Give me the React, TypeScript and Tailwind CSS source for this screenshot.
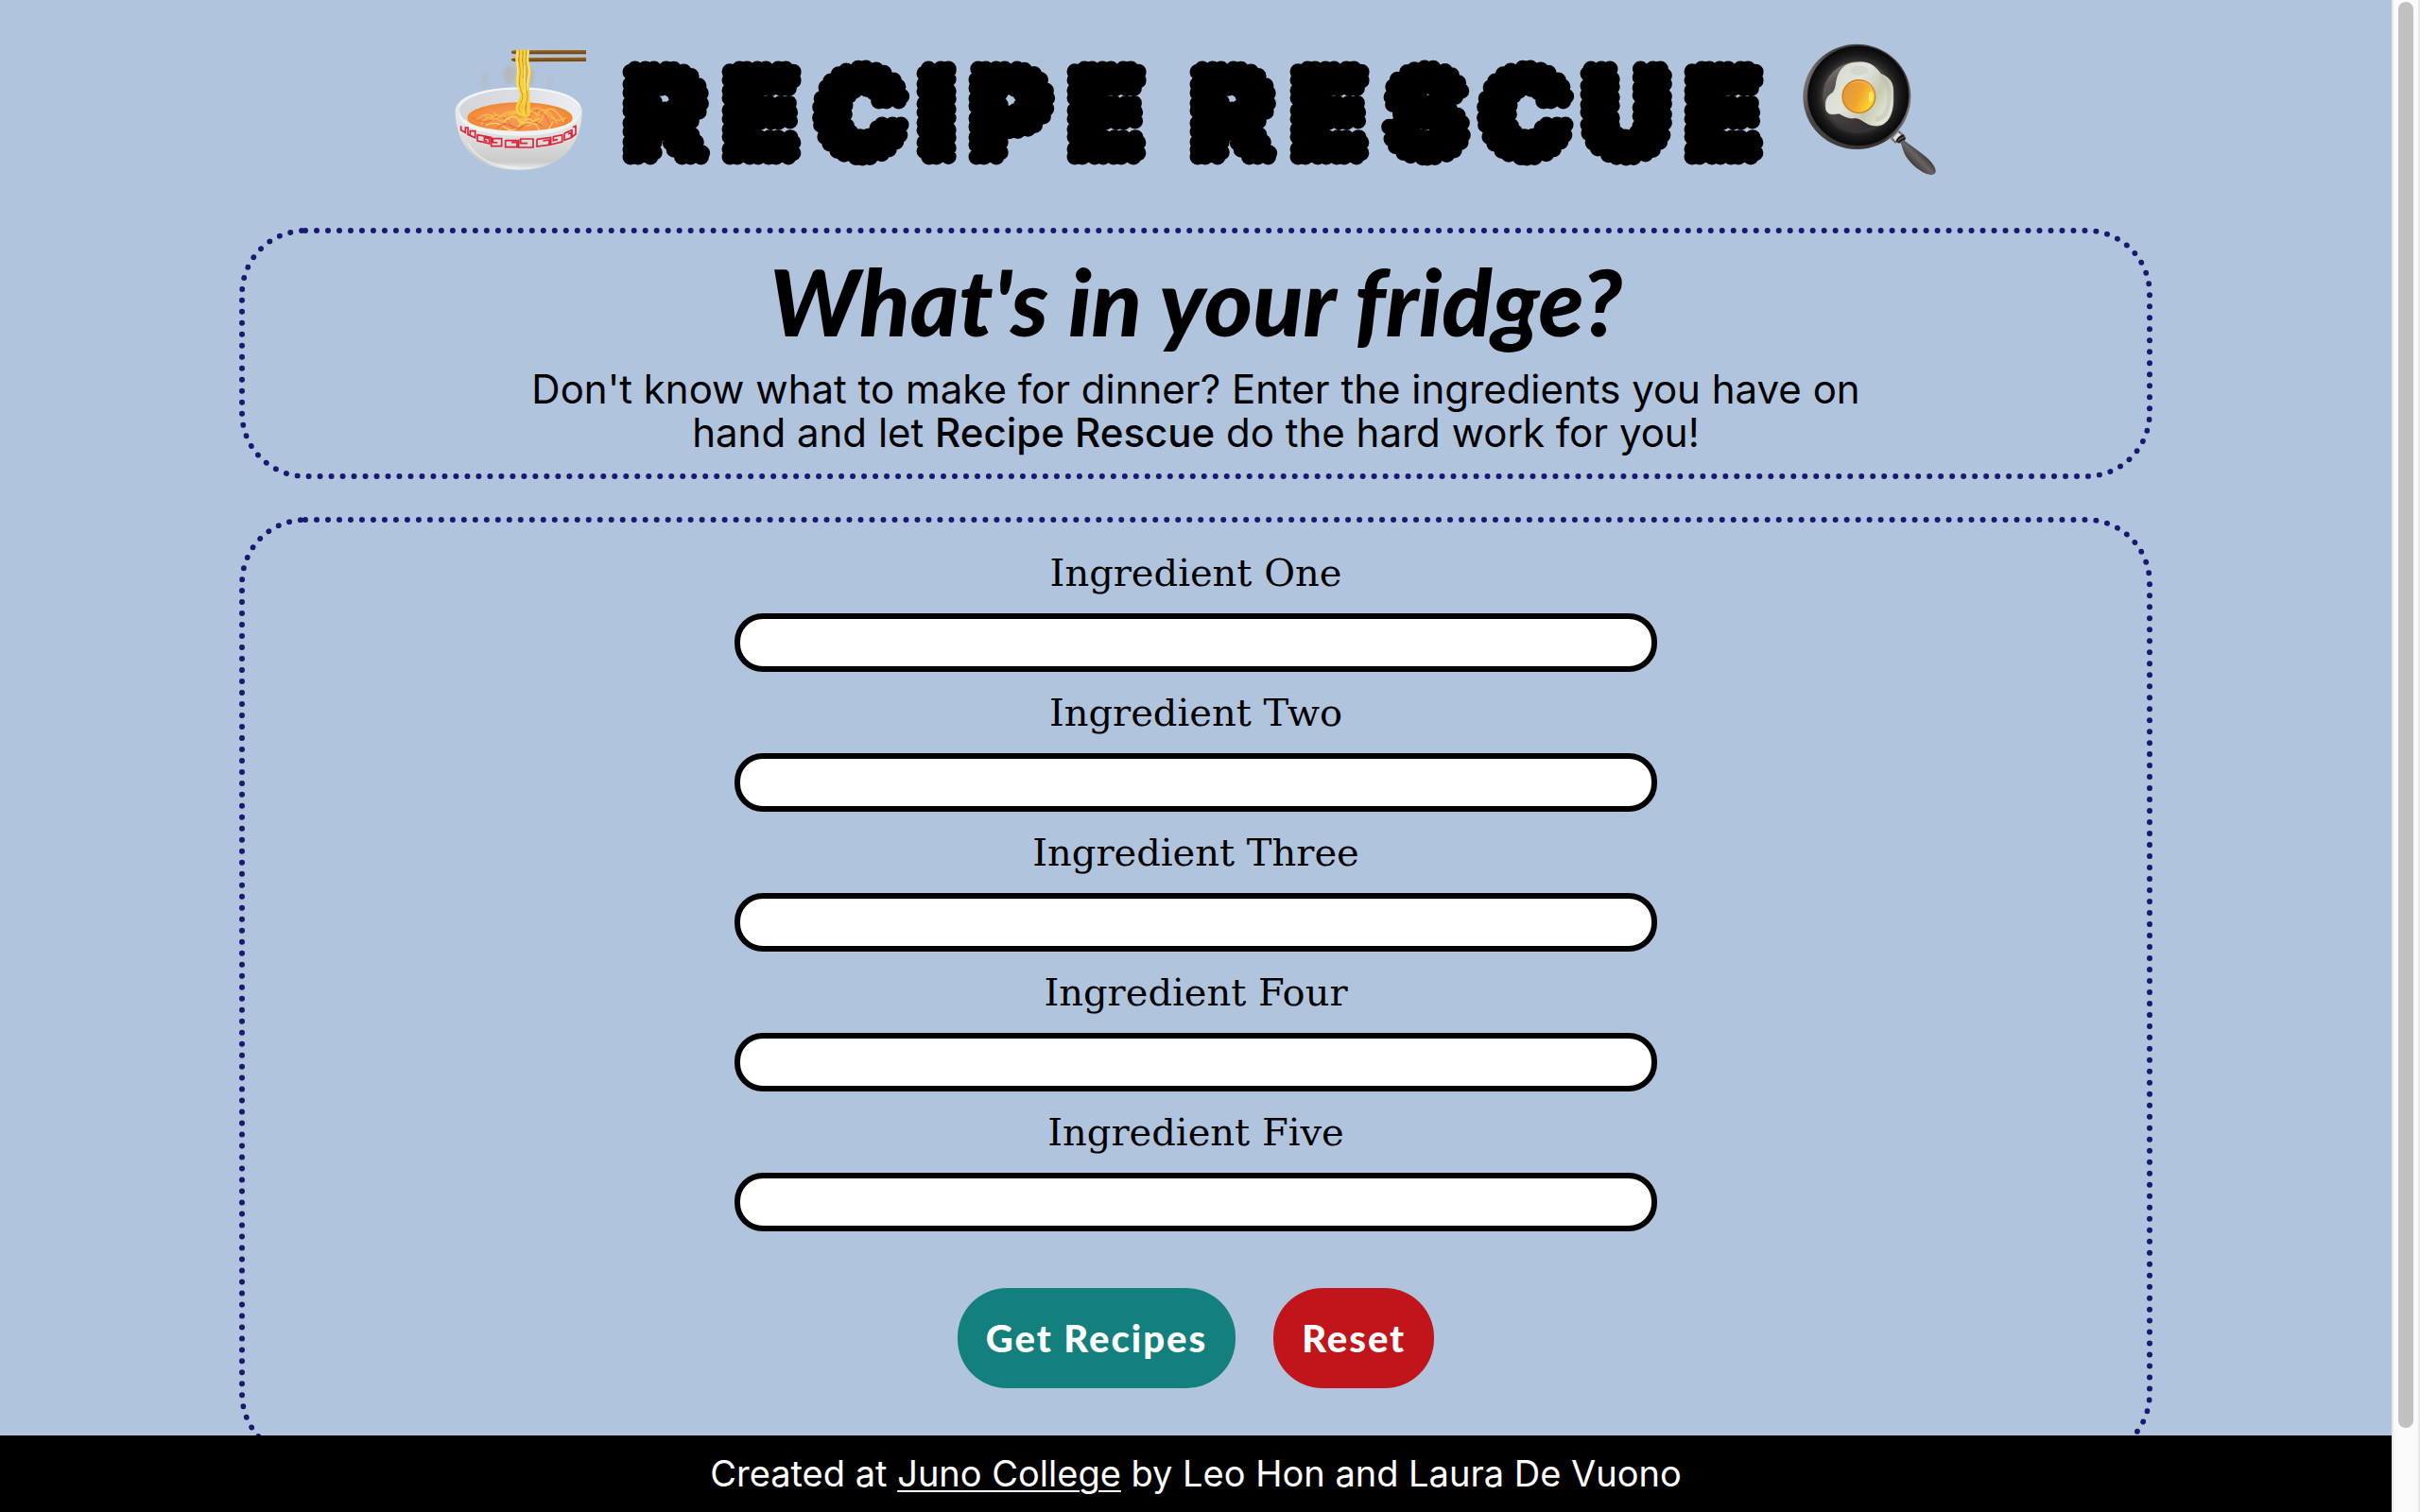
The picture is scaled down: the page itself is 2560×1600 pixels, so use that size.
import React from "react";

const ingredients = ["One", "Two", "Three", "Four", "Five"];

function NoodleBowl() {
  return (
    <svg viewBox="66 66 420 387" className="h-[129px] w-[140px] shrink-0" role="img" aria-label="Bowl of noodles">
      <defs>
        <linearGradient id="bowl" x1="0" y1="0" x2="0" y2="1">
          <stop offset="0" stopColor="#edf0f4" />
          <stop offset="0.55" stopColor="#e0e1e1" />
          <stop offset="0.9" stopColor="#cbcbca" />
          <stop offset="1" stopColor="#eceef0" />
        </linearGradient>
        <linearGradient id="inside" x1="0" y1="0" x2="1" y2="0">
          <stop offset="0" stopColor="#d4d5db" />
          <stop offset="0.5" stopColor="#dcdde2" />
          <stop offset="1" stopColor="#eceef3" />
        </linearGradient>
        <radialGradient id="soup">
          <stop offset="0" stopColor="#f5a04a" />
          <stop offset="0.7" stopColor="#f4904f" />
          <stop offset="1" stopColor="#ef8a2e" />
        </radialGradient>
        <linearGradient id="stick" x1="0" y1="0" x2="0" y2="1">
          <stop offset="0" stopColor="#a0681f" />
          <stop offset="1" stopColor="#6b3f0c" />
        </linearGradient>
        <filter id="steam" x="-50%" y="-50%" width="200%" height="200%">
          <feGaussianBlur stdDeviation="5" />
        </filter>
        <clipPath id="soupClip">
          <ellipse cx="273" cy="284" rx="165" ry="47" />
        </clipPath>
      </defs>
      <g fill="#b9b2ae" opacity="0.65" filter="url(#steam)">
        <ellipse cx="240" cy="147" rx="20" ry="29" />
        <ellipse cx="305" cy="152" rx="16" ry="28" />
        <ellipse cx="160" cy="165" rx="12" ry="28" opacity="0.5" />
        <ellipse cx="370" cy="170" rx="12" ry="25" opacity="0.3" />
      </g>
      <path d="M68 262C68 218 150 188 270 188S470 218 470 262C470 330 440 449 270 449S68 335 68 262Z" fill="url(#bowl)" />
      <path d="M80 262C82 225 160 193 270 193S458 225 458 262C458 300 385 324 272 324S82 300 80 262Z" fill="url(#inside)" />
      <ellipse cx="273" cy="284" rx="167" ry="49" fill="url(#soup)" />
      <g clipPath="url(#soupClip)" fill="none" stroke="#f8b843" strokeWidth="4">
        <path d="M135 290q24-22 48-14t44-6 40-2 42-8 50 12 60 12" />
        <path d="M150 304q22-34 50-16t44-8 50 10 54-14 66 22" stroke="#f5c256" />
        <path d="M120 282q40 28 68 5t54 18 58-18 66 14 54-13" stroke="#e86e3e" strokeWidth="3" />
        <path d="M160 276q30 24 55 0t56 16 54-12 66 22" />
        <path d="M165 308q32-16 60 6t52-12 50 10 50-16" stroke="#ffd05e" />
        <path d="M200 318q20-23 44-8t46-5 54 5" stroke="#e65d32" strokeWidth="3" />
        <path d="M190 268q18 18 40 8t46-16 60 18" stroke="#f7c14c" />
        <path d="M220 298q28-30 50-8t66-5" stroke="#fbd368" />
      </g>
      <path d="M82 258C78 300 150 326 272 326S462 302 462 256C478 302 400 341 272 341S64 306 82 258Z" fill="#f0f3f6" />
      <path d="M80 247C88 216 165 190 270 190S448 212 462 249" fill="none" stroke="#f3f6fa" strokeWidth="5" />
      <g fill="none" stroke="#dc2439" strokeWidth="5">
        <path d="M86 310V323l14 8v-16h8v22l23 10v-21h-16v12" />
        <path d="M138 337v20l38 9v-16l-16-3v9l9 2M138 338l44 8v28h33v-24h-28v12l15 1" />
        <path d="M227 355v22h37v-15h-18M227 356h42v22h46v-27h-40v14h22" />
        <path d="M327 352v23l39-5v-16l-20 3M327 352l44-6v23l36-9v-22l-28 6v12l14-3" />
        <path d="M414 333v22l22-8v-15l-10 3M414 333l24-10v22l12-9v-26l-9 4" />
      </g>
      <path d="M246 72l12-2 225-1v13l-225 0-12-3Z" fill="url(#stick)" />
      <path d="M246 97l12-3 225-2v13l-225 1-12-4Z" fill="url(#stick)" />
      <g fill="none" strokeLinecap="round">
        <path d="M266 72q-5 28 0 44t0 38 7 40-2 40 2 38M277 72q-4 28 0 44t0 38 7 40-4 40 2 38M288 72q-4 28 0 44t0 38 4 40-2 40 2 42M299 72q-6 28 0 44t2 38-3 40 2 40 0 40" stroke="#f7d23f" strokeWidth="10" />
        <path d="M272 76q-5 27 0 44t0 38 5 40-2 40 2 30M293 76q-4 27 0 44t0 38 2 40-2 40 2 35M283 76q-4 27 0 44t0 38" stroke="#cc8b20" strokeWidth="2.5" />
        <path d="M265 74q-4 27 0 44t0 38 6 40M299 74q-4 27 2 44t0 38-4 40M288 120q-5 27 0 44t0 38" stroke="#ffec8e" strokeWidth="3" />
        <path d="M276 272q24 8 18 22t-17 8q-20-12 6-14" stroke="#f7cb46" strokeWidth="4" />
      </g>
      <path d="M108 365C140 420 195 440 270 442" fill="none" stroke="#f5f6f7" strokeWidth="4" opacity="0.7" />
    </svg>
  );
}

function FryingPan() {
  return (
    <svg viewBox="84 48 426 420" className="h-[140px] w-[142px] shrink-0" role="img" aria-label="Egg in a frying pan">
      <defs>
        <linearGradient id="rim" x1="0" y1="0.3" x2="1" y2="0.6">
          <stop offset="0" stopColor="#85807e" />
          <stop offset="0.15" stopColor="#4b4746" />
          <stop offset="0.85" stopColor="#35302f" />
          <stop offset="1" stopColor="#777170" />
        </linearGradient>
        <radialGradient id="pan">
          <stop offset="0" stopColor="#4a4545" />
          <stop offset="0.66" stopColor="#3c3839" />
          <stop offset="0.82" stopColor="#1c1b1b" />
          <stop offset="1" stopColor="#080808" />
        </radialGradient>
        <linearGradient id="floor" x1="0" y1="0" x2="0.7" y2="1">
          <stop offset="0" stopColor="#aaa1a3" />
          <stop offset="0.25" stopColor="#5f5859" />
          <stop offset="0.6" stopColor="#474142" />
          <stop offset="1" stopColor="#302d2e" />
        </linearGradient>
        <linearGradient id="white" x1="0" y1="0" x2="1" y2="0.6">
          <stop offset="0" stopColor="#d3d8c8" />
          <stop offset="0.5" stopColor="#e0e4dc" />
          <stop offset="0.78" stopColor="#c8c9b4" />
          <stop offset="1" stopColor="#e0e5d4" />
        </linearGradient>
        <linearGradient id="yolk" x1="0" y1="0" x2="1" y2="0.5">
          <stop offset="0" stopColor="#dd9340" />
          <stop offset="0.6" stopColor="#efa52e" />
          <stop offset="1" stopColor="#ffd52d" />
        </linearGradient>
        <linearGradient id="handle" x1="0" y1="1" x2="1" y2="0">
          <stop offset="0.25" stopColor="#2b2727" />
          <stop offset="0.48" stopColor="#6a6364" />
          <stop offset="0.6" stopColor="#413b3b" />
        </linearGradient>
      </defs>
      <path d="M362 350L390 324L410 342L378 366Z" fill="#777779" />
      <path d="M370 348l16-17 11 8-18 19Z" fill="#e0e1df" />
      <path d="M380 362q-2-12 22-27l9 12-3 11q28 20 52 38c28 21 48 44 46 59-3 13-20 11-34 5-27-13-48-34-61-54q-7-13-15-41Z" fill="url(#handle)" />
      <path d="M382 359q5-14 22-19M387 363q8-10 22-14" stroke="#171616" strokeWidth="5" fill="none" />
      <ellipse cx="256" cy="217" rx="171" ry="167" fill="url(#rim)" />
      <ellipse cx="260" cy="214" rx="160" ry="158" fill="url(#pan)" stroke="#111" strokeWidth="2" />
      <ellipse cx="258" cy="217" rx="116" ry="116" fill="#383435" />
      <ellipse cx="259" cy="214" rx="111" ry="108" fill="url(#floor)" />
      <path d="M190 177C194 143 209 108 260 108C302 104 318 128 332 145C365 160 373 173 371 218C373 275 352 310 316 309C283 308 274 285 251 284C229 288 217 279 199 270C178 274 159 275 157 251C156 226 163 213 180 204Q188 193 190 177Z" fill="url(#white)" stroke="#e5e8d9" strokeWidth="2" />
      <path d="M330 153Q365 174 358 231T315 289" fill="none" stroke="#bcbda8" strokeWidth="14" opacity="0.45" />
      <ellipse cx="264" cy="134" rx="30" ry="15" fill="#c8ccc4" opacity="0.5" />
      <circle cx="262" cy="216" r="54" fill="#cf7c16" />
      <circle cx="262" cy="216" r="50" fill="url(#yolk)" />
      <path d="M218 190Q243 159 284 170Q308 181 311 207Q292 170 262 171Q235 171 218 190Z" fill="#f4b34b" />
      <ellipse cx="300" cy="217" rx="7" ry="17" fill="#ffe76d" />
    </svg>
  );
}

function Title() {
  return (
    <h1 className="min-w-0 shrink">
      <svg viewBox="0 0 1222 140" className="h-[140px] w-[1222px] max-w-full overflow-visible" role="img" aria-label="Recipe Rescue">
        <text
          x="8 113 210 319 374 478 580 608 714 813 913 1021 1131"
          y="120"
          fontSize="128"
          fill="#000"
          stroke="#000"
          strokeWidth="17"
          strokeLinecap="round"
          strokeDasharray="0 8 0 13 0 9 0 11"
          className="font-['Inter',sans-serif] font-black"
        >
          RECIPE RESCUE
        </text>
      </svg>
    </h1>
  );
}

export default function App() {
  return (
    <div className="flex h-screen bg-[#b0c4de] text-black">
      <div className="flex min-w-0 flex-1 flex-col">
        <main className="min-h-0 flex-1 overflow-hidden">
          <header className="flex items-center justify-center gap-8 pt-[46px]">
            <NoodleBowl />
            <Title />
            <FryingPan />
          </header>

          <section className="mx-auto mt-[55px] w-4/5 rounded-[70px] border-[6px] border-dotted border-[#191970] px-[200px] pt-6 pb-5 text-center">
            <h2 className="mb-6 font-['Lato',sans-serif] text-[98px] leading-[94px] font-black italic">What's in your fridge?</h2>
            <p className="mx-auto max-w-[1480px] font-['Inter',sans-serif] text-[42px] leading-[46px]">
              Don't know what to make for dinner? Enter the ingredients you have on
              <br />
              hand and let <strong className="font-medium">Recipe Rescue</strong> do the hard work for you!
            </p>
          </section>

          <form
            className="mx-auto mt-10 w-4/5 rounded-[70px] border-[6px] border-dotted border-[#191970] pt-[22px] pb-[70px]"
            onSubmit={(e) => e.preventDefault()}
          >
            <div className="mx-auto flex w-[976px] max-w-full flex-col">
              {ingredients.map((name) => (
                <div key={name} className="flex flex-col">
                  <label
                    htmlFor={name}
                    className="h-[74px] text-center font-['DejaVu_Serif',serif] text-[40px] leading-[62px]"
                  >
                    Ingredient {name}
                  </label>
                  <input
                    id={name}
                    type="text"
                    className="mb-3 h-[62px] w-full rounded-[30px] border-[6px] border-black bg-white px-6 font-['Inter',sans-serif] text-[32px]"
                  />
                </div>
              ))}
            </div>
            <div className="mt-12 flex justify-center gap-10 font-['Lato',sans-serif] text-[40px] leading-[46px] font-black tracking-wider text-white">
              <button type="submit" className="h-[106px] rounded-[52px] bg-[#13807e] px-[30px]">
                Get Recipes
              </button>
              <button type="reset" className="h-[106px] rounded-[52px] bg-[#c1151b] px-[30px]">
                Reset
              </button>
            </div>
          </form>
        </main>

        <footer className="flex h-[81px] items-center justify-center bg-black font-['Inter',sans-serif] text-[38px] text-white">
          <p>
            Created at{" "}
            <a href="#juno" className="underline decoration-2 underline-offset-4">
              Juno College
            </a>{" "}
            by Leo Hon and Laura De Vuono
          </p>
        </footer>
      </div>

      <div className="w-[30px] shrink-0 border-r-2 border-l-2 border-[#e8e8e8] bg-[#fafafa] px-1 pt-0.5 pb-[89px]" aria-hidden="true">
        <div className="mx-auto h-full w-4 rounded-full bg-[#c1c1c1]" />
      </div>
    </div>
  );
}
